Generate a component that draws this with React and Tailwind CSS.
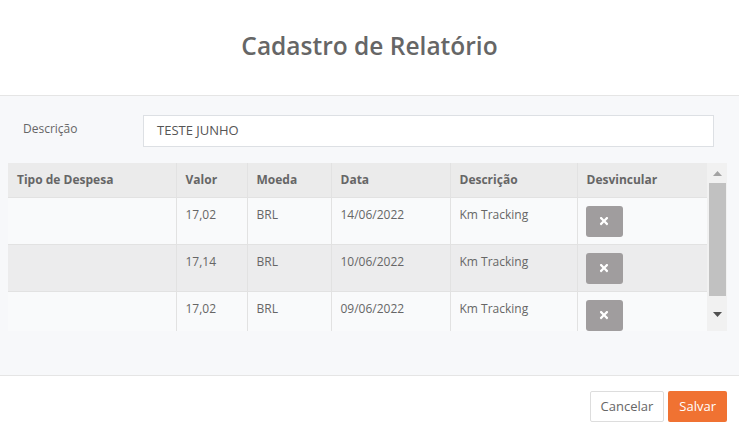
import { FaTimes } from 'react-icons/fa';

const rows = [
  { tipo: '', valor: '17,02', moeda: 'BRL', data: '14/06/2022', desc: 'Km Tracking' },
  { tipo: '', valor: '17,14', moeda: 'BRL', data: '10/06/2022', desc: 'Km Tracking' },
  { tipo: '', valor: '17,02', moeda: 'BRL', data: '09/06/2022', desc: 'Km Tracking' },
];

export default function App() {
  return (
    <div className="w-[739px] h-[430px] bg-white flex flex-col text-[#666]" style={{ fontFamily: '"Open Sans", sans-serif' }}>
      {/* header */}
      <div className="h-[96px] flex items-center justify-center border-b border-[#e5e5e5] shrink-0">
        <h1 className="text-[24.5px] font-semibold text-[#666] pb-[2px]">Cadastro de Relatório</h1>
      </div>

      {/* body */}
      <div className="h-[280px] bg-[#f7f8fa] border-b border-[#e5e5e5] shrink-0 pt-[19px]">
        <div className="flex items-center h-[32px]">
          <label className="w-[143px] pl-[23px] text-[12px] text-[#666] pb-[4px]">Descrição</label>
          <div className="w-[571px] h-[32px] bg-white border border-[#dde0e4] flex items-center px-[13px] text-[13px] text-[#555]">
            TESTE JUNHO
          </div>
        </div>

        <div className="flex ml-[8px] mt-[16px] h-[168px]">
          <div className="w-[699px] overflow-hidden">
            <table className="w-full border-collapse text-[12px] table-fixed">
              <colgroup>
                <col className="w-[168px]" />
                <col className="w-[71px]" />
                <col className="w-[84px]" />
                <col className="w-[119px]" />
                <col className="w-[127px]" />
                <col />
              </colgroup>
              <thead>
                <tr className="bg-[#ebebeb] h-[34px]">
                  {['Tipo de Despesa', 'Valor', 'Moeda', 'Data', 'Descrição', 'Desvincular'].map((h, i) => (
                    <th
                      key={h}
                      className={`text-left font-bold text-[#666] px-[9px] border-b border-[#e2e2e2] ${i > 0 ? 'border-l border-l-[#e2e2e2]' : ''}`}
                    >
                      {h}
                    </th>
                  ))}
                </tr>
              </thead>
              <tbody>
                {rows.map((r, idx) => (
                  <tr key={idx} className={`${idx % 2 === 1 ? 'bg-[#ececed]' : 'bg-[#f9fafb]'} h-[47px] align-top`}>
                    <td className="px-[9px] pt-[8px] border-b border-[#e2e2e2]">{r.tipo}</td>
                    <td className="px-[9px] pt-[8px] border-b border-l border-[#e2e2e2]">{r.valor}</td>
                    <td className="px-[9px] pt-[8px] border-b border-l border-[#e2e2e2]">{r.moeda}</td>
                    <td className="px-[9px] pt-[8px] border-b border-l border-[#e2e2e2]">{r.data}</td>
                    <td className="px-[9px] pt-[8px] border-b border-l border-[#e2e2e2]">{r.desc}</td>
                    <td className="px-[8px] pt-[8px] border-b border-l border-[#e2e2e2]">
                      <button className="w-[37px] h-[31px] rounded-[3px] bg-[#a09d9e] flex items-center justify-center text-white">
                        <FaTimes size={12} />
                      </button>
                    </td>
                  </tr>
                ))}
              </tbody>
            </table>
          </div>

          {/* scrollbar */}
          <div className="w-[20px] h-full bg-[#f1f1f1] flex flex-col items-center">
            <div className="h-[20px] flex items-center justify-center">
              <svg width="9" height="5" viewBox="0 0 9 5"><path d="M0 5 L4.5 0 L9 5 Z" fill="#a3a3a3" /></svg>
            </div>
            <div className="w-[17px] h-[113px] bg-[#c1c1c1]" />
            <div className="flex-1 flex items-center justify-center pt-[2px]">
              <svg width="9" height="5" viewBox="0 0 9 5"><path d="M0 0 L9 0 L4.5 5 Z" fill="#505050" /></svg>
            </div>
          </div>
        </div>
      </div>

      {/* footer */}
      <div className="flex-1 flex items-start justify-end gap-[4px] pt-[15px] pr-[12px]">
        <button className="h-[31px] px-[10px] bg-white border border-[#ddd] rounded-[2px] text-[13px] text-[#666]">Cancelar</button>
        <button className="h-[31px] px-[11px] bg-[#f07232] rounded-[2px] text-[13px] text-white">Salvar</button>
      </div>
    </div>
  );
}
